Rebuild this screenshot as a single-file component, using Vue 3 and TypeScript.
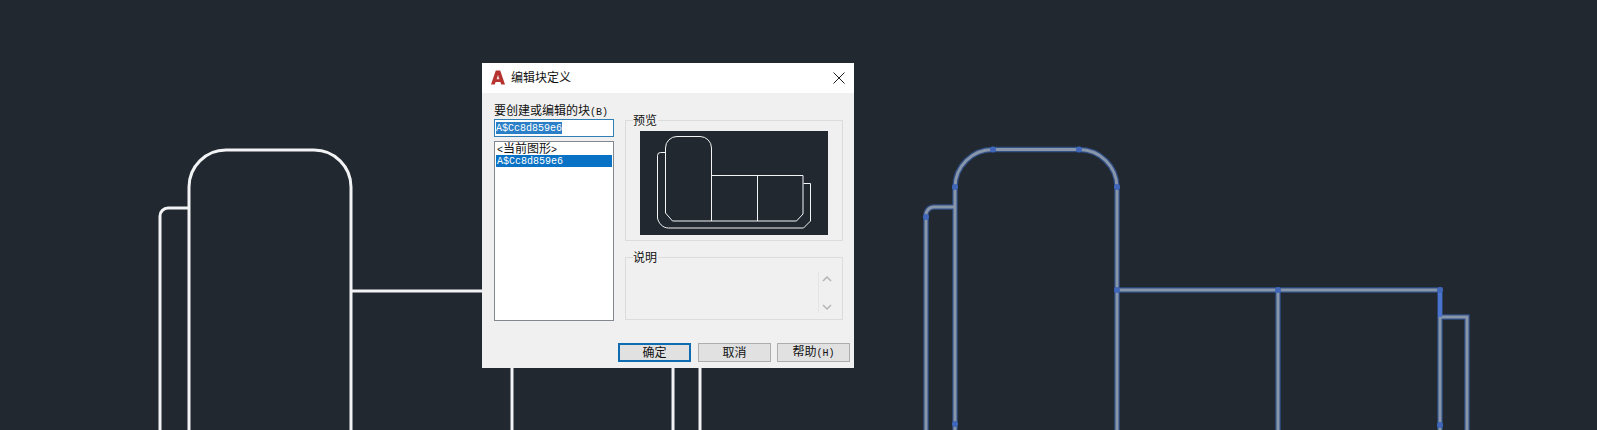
<script setup lang="ts">
const blockName = 'A$Cc8d859e6'

// grip points on the selected block
const grips = [
  [955, 187], [1117, 187], [993, 149.5], [1079, 149.5], [955, 424],
  [926, 217], [1117, 290], [1278, 290], [1440, 290], [1440, 425],
]
</script>

<template>
  <div class="page">
    <svg class="cad" width="1597" height="430" viewBox="0 0 1597 430" fill="none">
      <g stroke="#f1f3f4" stroke-width="3">
        <path d="M189 430V187a37 37 0 0 1 37-37h88a37 37 0 0 1 37 37v243" />
        <path d="M189 208h-21a8 8 0 0 0-8 8v214" />
        <path d="M351 291h322v139" />
        <path d="M512 291v139" />
        <path d="M673 318h27v112" />
      </g>
      <g>
        <g stroke="#314e85" stroke-width="5.500">
          <path d="M955 430V187a38 38 0 0 1 38-37.500h86a38 38 0 0 1 38 37.500v243" />
          <path d="M955 207h-21a8 8 0 0 0-8 9v214" />
          <path d="M1117 290h323v140" />
          <path d="M1278 290v140" />
          <path d="M1440 317h27v113" />
        </g>
        <g stroke="#8896aa" stroke-width="3">
          <path d="M955 430V187a38 38 0 0 1 38-37.500h86a38 38 0 0 1 38 37.500v243" />
          <path d="M955 207h-21a8 8 0 0 0-8 9v214" />
          <path d="M1117 290h323v140" />
          <path d="M1278 290v140" />
          <path d="M1440 317h27v113" />
        </g>
        <path d="M1440 290v27" stroke="#4a74d0" stroke-width="4" />
        <circle v-for="g in grips" :key="g.join()" :cx="g[0]" :cy="g[1]" r="3" fill="#3f66b8" />
      </g>
    </svg>

    <div class="dialog">
      <div class="titlebar">
        <svg class="logo" width="16" height="16" viewBox="0 0 16 16">
          <path d="M1 14.500 5.800.5h4.400L15 14.500h-3.800l-.8-2.500H5.600l-.8 2.500z" fill="#b5332e" />
          <path d="M6.600 9.300h2.800L8 4.800z" fill="#f6dcdc" />
        </svg>
        <span class="title">编辑块定义</span>
        <svg class="close" width="12" height="12" viewBox="0 0 12 12" stroke="#222" fill="none">
          <path d="M.5.5l11 11M11.500.5l-11 11" />
        </svg>
      </div>

      <div class="body">
        <div class="left">
          <label class="cap">要创建或编辑的块<span class="en">(B)</span></label>
          <div class="input"><span class="sel">{{ blockName }}</span></div>
          <div class="list">
            <div class="item"><span class="en">&lt;</span>当前图形<span class="en">&gt;</span></div>
            <div class="item active">{{ blockName }}</div>
          </div>
        </div>

        <div class="right">
          <fieldset class="group preview">
            <legend>预览</legend>
            <svg class="thumb" width="188" height="104" viewBox="640 131 188 104" fill="none" stroke="#f4f5f6">
              <path d="M665.500 213V148a11.500 11.500 0 0 1 11.500-11.500h23a11.500 11.500 0 0 1 11.500 11.500v73" />
              <path d="M665.500 152.500h-5a3 3 0 0 0-3 3V218c1 5 5 10 11 10h135l7-7v-37.500h-7" />
              <path d="M665.500 213l7 8h124l6.500-7V175.500h-92" />
              <path d="M757.500 175.500V221" />
            </svg>
          </fieldset>

          <fieldset class="group desc">
            <legend>说明</legend>
            <div class="scroll">
              <svg width="10" height="7" viewBox="0 0 10 7" fill="none" stroke="#b4b4b4" stroke-width="1.500">
                <path d="M1 6l4-4 4 4" />
              </svg>
              <svg width="10" height="7" viewBox="0 0 10 7" fill="none" stroke="#b4b4b4" stroke-width="1.500">
                <path d="M1 1l4 4 4-4" />
              </svg>
            </div>
          </fieldset>
        </div>
      </div>

      <div class="buttons">
        <button class="btn primary">确定</button>
        <button class="btn">取消</button>
        <button class="btn">帮助<span class="en">(H)</span></button>
      </div>
    </div>
  </div>
</template>

<style>
html,
body {
  margin: 0;
  background: #222830;
}
</style>

<style scoped>
.page {
  position: relative;
  width: 1597px;
  height: 430px;
  overflow: hidden;
  background: #222830;
  font-family: "Liberation Mono", "Noto Sans CJK SC", monospace;
}

.cad {
  position: absolute;
  left: 0;
  top: 0;
}

.dialog {
  position: absolute;
  left: 482px;
  top: 63px;
  width: 372px;
  height: 305px;
  display: flex;
  flex-direction: column;
  background: #f0f0f0;
  color: #111;
  font-size: 12px;
  line-height: 14px;
}

.en {
  font-size: 10px;
}

.titlebar {
  height: 30px;
  flex: none;
  display: flex;
  align-items: center;
  padding: 0 9px 0 8px;
  background: #fff;
}

.logo {
  flex: none;
}

.title {
  margin-left: 5px;
  padding-top: 2px;
  flex: 1;
}

.body {
  flex: 1;
  display: flex;
  gap: 11px;
  padding: 0 11px 0 12px;
  min-height: 0;
}

.left {
  width: 120px;
  flex: none;
  display: flex;
  flex-direction: column;
  padding-top: 9px;
}

.cap {
  height: 17px;
  box-sizing: border-box;
  padding-top: 3px;
  white-space: nowrap;
}

.input {
  height: 18px;
  box-sizing: border-box;
  display: flex;
  align-items: flex-start;
  border: 1px solid #2f7fb5;
  background: #fff;
  padding: 2px 1px;
  font-size: 10px;
}

.sel {
  height: 12px;
  line-height: 14px;
  background: #2a7fc6;
  color: #fff;
}

.list {
  margin-top: 4px;
  height: 180px;
  box-sizing: border-box;
  border: 1px solid #828790;
  background: #fff;
  padding: 1px;
  font-size: 10px;
}

.item {
  height: 12px;
  line-height: 14px;
  padding-left: 1px;
  white-space: nowrap;
}

.item:first-child {
  font-size: 12px;
}

.item.active {
  background: #0a72c4;
  color: #fff;
}

.right {
  width: 218px;
  flex: none;
  display: flex;
  flex-direction: column;
}

.group {
  margin: 0;
  padding: 0;
  min-width: 0;
  box-sizing: border-box;
  border: 1px solid #dcdcdc;
}

.group legend {
  margin-left: 7px;
  padding: 4px 1px 0 0;
  line-height: 14px;
}

.preview {
  margin-top: 18px;
  height: 130px;
  padding-top: 2px;
}

.thumb {
  display: block;
  margin-left: 14px;
  background: #222830;
}

.desc {
  margin-top: 7px;
  height: 72px;
  display: flex;
  justify-content: flex-end;
}

.scroll {
  width: 24px;
  height: 41px;
  box-sizing: border-box;
  margin-top: 6px;
  border-left: 1px solid #e4e4e4;
  display: flex;
  flex-direction: column;
  align-items: flex-start;
  justify-content: space-between;
  padding: 3px 0 2px 3px;
}

.buttons {
  flex: none;
  display: flex;
  gap: 6px;
  padding: 0 4px 6px 136px;
}

.btn {
  width: 73px;
  height: 19px;
  box-sizing: border-box;
  margin: 0;
  padding: 2px 0 0;
  border: 1px solid #adadad;
  background: #e1e1e1;
  color: #111;
  font: inherit;
  line-height: 14px;
}

.btn.primary {
  border: 2px solid #0f6cb0;
  margin-right: 1px;
}
</style>
